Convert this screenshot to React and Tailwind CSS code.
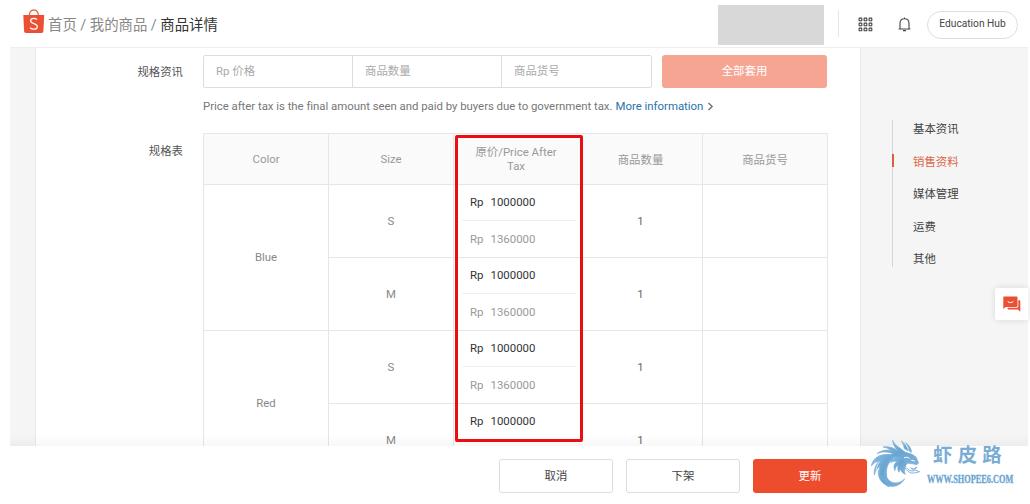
import React from "react";

const variants = [
  { color: "Blue", sizes: ["S", "M"] },
  { color: "Red", sizes: ["S", "M"] },
];
const sections = ["基本资讯", "销售资料", "媒体管理", "运费", "其他"];

function BagLogo() {
  return (
    <svg className="block h-[25px] w-[22px]" viewBox="0 0 22 25" fill="none">
      <path d="M6.3 7C6.3 3 8 1 10.8 1s4.5 2 4.5 6" stroke="#df6d53" strokeWidth="1.3" />
      <path d="M.3 6h20.9l-.8 16.3c-.1 1-.8 1.7-1.9 1.7H3c-1.1 0-1.8-.7-1.9-1.7z" fill="#ea5034" />
      <path d="M14 10.500c-1-.8-2-1.200-3.200-1.200-1.900 0-3.200 1-3.200 2.500 0 3.500 6.700 2 6.700 5.700 0 1.600-1.400 2.700-3.500 2.700-1.400 0-2.700-.5-3.800-1.400" stroke="#fff" strokeWidth="1.3" />
    </svg>
  );
}

function GridIcon() {
  return (
    <svg className="block h-[15px] w-[15px]" viewBox="0 0 15 15" fill="none" stroke="#444" strokeWidth="1.1">
      {[1, 6, 11].map((y) =>
        [1, 6, 11].map((x) => <rect key={x + "-" + y} x={x + 0.1} y={y + 0.1} width="2.7" height="2.7" rx=".4" />)
      )}
    </svg>
  );
}

function BellIcon() {
  return (
    <svg className="block h-[15px] w-[13px]" viewBox="0 0 13 15" fill="none" stroke="#444" strokeWidth="1.1">
      <path d="M.6 12h11.800M2 12V6.300C2 3.500 3.900 1.700 6.500 1.700S11 3.500 11 6.300V12M6.500.4v1.300M5 13.600h3" />
    </svg>
  );
}

function ChatIcon() {
  return (
    <svg className="block h-[16px] w-[18px]" viewBox="0 0 18 16">
      <path d="M1.300.5h12c.7 0 1.200.5 1.200 1.200v8.100c0 .7-.5 1.200-1.200 1.200H2.700L.3 12.900V1.700C.3 1 .7.500 1.300.500z" fill="#ea5034" />
      <path d="M15.300 4.200h1c.6 0 1 .4 1 1v10.600l-2.500-2.300H5.700c-.7 0-1.100-.4-1.100-1v-.7h9.500c.7 0 1.200-.5 1.200-1.200z" fill="#ea5034" />
      <path d="M4.700 5.500c1.800 1.500 3.800 1.500 5.700 0" stroke="#fff" strokeWidth="1" fill="none" />
    </svg>
  );
}

function Watermark() {
  return (
    <svg className="absolute top-[440px] left-[870px] h-[50px] w-[150px]" viewBox="90 30 450 150">
      <defs>
        <linearGradient id="dragon" x1="0" y1="0" x2="1" y2="1">
          <stop offset="0" stopColor="#8abfe3" />
          <stop offset="0.5" stopColor="#68a5d1" />
          <stop offset="1" stopColor="#82b3db" />
        </linearGradient>
      </defs>
      <g transform="translate(76 18)">
        <g fill="url(#dragon)" stroke="#78afd8" strokeWidth="2" strokeLinejoin="round">
          <path d="M82 13c4 10 11 17 22 23l16 13c12 2 22 6 32 14l4 9 4 9-6 5c-9-1-16-4-24-4-6 1-9 4-9 8-7-6-10-14-19-19-14-8-32-11-50-4 9-9 20-13 33-13-15-7-33-9-50-1 12-10 28-13 42-9-8-7-15-10-24-11 17-3 32 2 44 11-9-9-14-19-15-31z" />
          <path d="M108 15c10 7 18 17 20 30l-12-8c0-8-3-15-8-22zM121 20c10 8 17 17 18 29l-8-4c0-9-4-17-10-25z" />
          <path d="M71 56C46 52 22 65 18 90c7-9 14-13 23-15-11 12-16 27-14 42 3-10 8-19 16-27-6 26 5 49 27 63-7-13-9-24-6-36-3-22 5-38 22-51z" />
          <path d="M82 64c-17 13-25 32-20 52 5 20 20 27 35 24 9-2 16-6 21-12-9 17-29 27-48 22-22-6-33-25-31-47 4 16 13 27 27 35-13-24-10-50 16-74z" />
          <path d="M82 63c16-2 29 3 37 13 4 6 3 15 0 20-2 7-2 12 1 19-8-3-14-9-16-17l-3 11c-4-7-5-14-2-21-7 3-10 9-10 16-6-12-3-22 7-28-7-1-14 0-19 4 2-7 4-12 5-17z" />
        </g>
        <g fill="none" strokeLinecap="round">
          <path d="M119 96c5 7 10 12 18 15 11 1 19-2 26-4l-15-5 6-9-9 6-9-3 11 8c-9 3-18-1-23-8" stroke="#82b3db" strokeWidth="3" />
          <path d="M117 65c5-2 11-2 15 2M139 73l8 2" stroke="#fff" strokeWidth="3" />
          <path d="M43 77c-9 12-13 25-9 39" stroke="#fff" strokeWidth="2" />
        </g>
      </g>
      <text x="279" y="95" fontSize="58" fontWeight="700" letterSpacing="16" fill="#79add5" className="font-['Noto_Sans_CJK_SC',sans-serif]">虾皮路</text>
      <text x="261" y="160" fontSize="35" fontWeight="700" textLength="259" lengthAdjust="spacingAndGlyphs" fill="#6aa5d1" stroke="#6aa5d1" strokeWidth="1" className="font-['Liberation_Serif',serif]">WWW.SHOPEE6.COM</text>
    </svg>
  );
}

function PriceCell({ taxed }) {
  return (
    <div className="flex flex-col pr-[3px] pl-[8px] tracking-[0.02px]">
      <div className="flex h-[36px] items-center gap-[7px] border-b border-[#eee] pb-px pl-[8px] text-[#333]">
        <span>Rp</span>
        <span>1000000</span>
      </div>
      {taxed && (
        <div className="flex h-[36px] items-center gap-[7px] pl-[8px] text-[#999]">
          <span>Rp</span>
          <span>1360000</span>
        </div>
      )}
    </div>
  );
}

export default function App() {
  return (
    <div className="relative flex h-[504px] w-[1030px] flex-col overflow-hidden bg-white font-[Roboto,'Noto_Sans_CJK_SC',sans-serif] text-[11.4px] leading-[14px] text-[#888]">
      <header className="flex h-[47px] shrink-0 items-center pr-[12px] pl-[22.5px]">
        <div className="mb-[4px]"><BagLogo /></div>
        <nav className="ml-[3.5px] flex gap-[3.5px] pt-[4px] text-[14.4px] leading-[20px] whitespace-nowrap text-[#888]">
          <span>首页</span><span>/</span><span>我的商品</span><span>/</span>
          <span className="text-[#333]">商品详情</span>
        </nav>
        <div className="mb-[2px] ml-auto h-[40px] w-[106px] self-end bg-[#d8d8d8]" />
        <div className="ml-[14px] h-[27px] w-px bg-[#e5e5e5]" />
        <div className="mt-[2px] ml-[19px]"><GridIcon /></div>
        <div className="mt-[2px] ml-[25px]"><BellIcon /></div>
        <button className="mt-[2px] ml-[16px] h-[28px] w-[91px] rounded-full border border-[#ddd] pb-px text-[10.2px] whitespace-nowrap text-[#444]">Education Hub</button>
      </header>

      <main className="relative ml-[10px] flex h-[399px] w-[1018px] shrink-0 overflow-hidden border-t border-[#eee] bg-[#f5f5f5]">
        <div className="ml-[25px] w-[826px] shrink-0 border-x border-[#e9e9e9] bg-white">
          <div className="flex pt-[7px]">
            <div className="w-[147px] pt-[10px] text-right text-[#555]">规格资讯</div>
            <div className="ml-[20px] flex h-[33px] w-[449px] rounded-[2px] border border-[#ddd] text-[#aaa]">
              <div className="flex w-[149px] items-center border-r border-[#ddd] pb-px pl-[12px]">Rp 价格</div>
              <div className="flex w-[149px] items-center border-r border-[#ddd] pb-px pl-[12px]">商品数量</div>
              <div className="flex items-center pb-px pl-[12px]">商品货号</div>
            </div>
            <button className="ml-[10px] h-[33px] w-[165px] rounded-[3px] bg-[#f7a593] pb-px text-white">全部套用</button>
          </div>
          <p className="mt-[11px] ml-[167px] flex items-center whitespace-nowrap text-[#777]">
            <span className="tracking-[-0.026px]">Price after tax is the final amount seen and paid by buyers due to government tax.</span>
            <a className="ml-[3px] text-[#2673aa]">More information</a>
            <svg className="ml-[4px] h-[9px] w-[7px]" viewBox="0 0 7 9" fill="none" stroke="#666" strokeWidth="1.2"><path d="M1.500 1l3.700 3.500L1.500 8" /></svg>
          </p>
          <div className="mt-[20px] flex">
            <div className="w-[147px] pt-[11px] text-right text-[#555]">规格表</div>
            <div className="ml-[20px] w-[625px] shrink-0 border border-[#e6e6e6]">
              <div className="grid h-[51px] grid-cols-[125px_125px_249px_124px] divide-x divide-[#e6e6e6] border-b border-[#e6e6e6] bg-[#fafafa] text-center text-[#999]">
                <div className="flex items-center justify-center">Color</div>
                <div className="flex items-center justify-center">Size</div>
                <div className="flex">
                  <div className="flex w-[125px] items-center justify-center pr-[15px] pl-[14px]">原价/Price After Tax</div>
                  <div className="flex flex-1 items-center justify-center pt-px">商品数量</div>
                </div>
                <div className="flex items-center justify-center pt-px">商品货号</div>
              </div>
              {variants.map((v, vi) => (
                <div key={v.color} className="flex h-[146px] border-b border-[#e6e6e6]">
                  <div className="flex w-[125px] items-center justify-center border-r border-[#e6e6e6] pb-px">{v.color}</div>
                  <div className="flex-1 divide-y divide-[#e6e6e6]">
                    {v.sizes.map((s, si) => (
                      <div key={s} className={si === 0 ? "flex h-[73px]" : "flex h-[72px]"}>
                        <div className="flex w-[125px] items-center justify-center border-r border-[#e6e6e6]">{s}</div>
                        <div className="w-[125px]"><PriceCell taxed={!(vi === 1 && si === 1)} /></div>
                        <div className="flex w-[124px] items-center justify-center border-r border-[#e6e6e6] text-[#666]">1</div>
                        <div className="flex-1" />
                      </div>
                    ))}
                  </div>
                </div>
              ))}
            </div>
          </div>
        </div>
        <aside className="mt-[72px] ml-[31px] h-[147px] w-[100px] text-[#444]">
          <ul className="flex h-full flex-col border-l border-[#d5d5d5] pt-[2px]">
            {sections.map((s, i) => (
              <li key={s} className={i === 1 ? "relative mb-[18.6px] pl-[20px] text-[#dc6548]" : "mb-[18.6px] pl-[20px]"}>
                {i === 1 && <span className="absolute -top-[1px] -left-[1.5px] h-[13px] w-[2px] bg-[#d95f42]" />}
                <span>{s}</span>
              </li>
            ))}
          </ul>
        </aside>
        <div className="absolute inset-x-0 bottom-0 h-[12px] bg-linear-to-b from-transparent to-black/3" />
      </main>

      <footer className="flex h-[58px] items-center gap-[13px] pt-[2px] pl-[499px] text-[#444]">
        <button className="h-[34px] w-[114px] rounded-[3px] border border-[#ddd]">取消</button>
        <button className="h-[34px] w-[114px] rounded-[3px] border border-[#ddd]">下架</button>
        <button className="h-[34px] w-[114px] rounded-[3px] bg-[#ee4d2d] text-white">更新</button>
      </footer>

      <div className="absolute top-[135px] left-[455px] h-[307px] w-[128px] rounded-[2px] border-3 border-[#e90d14]" />
      <div className="absolute top-[288px] left-[995px] flex h-[32px] w-[33px] items-center justify-center rounded-l-[2px] bg-white shadow-[0_0_6px_rgba(0,0,0,0.12)]"><ChatIcon /></div>
      <Watermark />
    </div>
  );
}
